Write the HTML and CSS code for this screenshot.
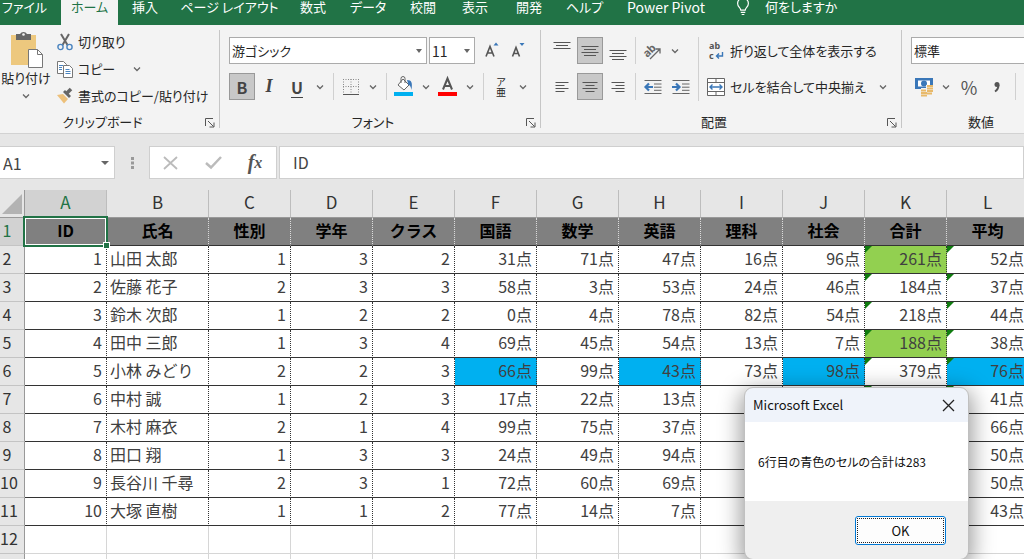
FILE: index.html
```html
<!DOCTYPE html>
<html lang="ja">
<head>
<meta charset="utf-8">
<meta name="viewport" content="width=device-width, initial-scale=1">
<title>Microsoft Excel</title>
<link rel="stylesheet" href="styles.css">
</head>
<body>
<svg class="defs" width="0" height="0" aria-hidden="true">
  <symbol id="chev" viewBox="0 0 8 8"><path d="M1 2.5 4 5.5 7 2.5" fill="none" stroke="#666" stroke-width="1.3"/></symbol>
  <symbol id="launch" viewBox="0 0 10 10"><path d="M.5 8V.5H8M3 3l5.5 5.5M9 4.5V9H4.5" fill="none" stroke="#555"/></symbol>
</svg>

<nav class="tabs">
  <button class="tab file">ファイル</button>
  <button class="tab active">ホーム</button>
  <button class="tab">挿入</button>
  <button class="tab">ページ レイアウト</button>
  <button class="tab">数式</button>
  <button class="tab">データ</button>
  <button class="tab">校閲</button>
  <button class="tab">表示</button>
  <button class="tab">開発</button>
  <button class="tab">ヘルプ</button>
  <button class="tab latin">Power Pivot</button>
  <button class="tab tell">
    <svg width="14" height="18" viewBox="0 0 14 20" fill="none" stroke="#fff" stroke-width="1.3"><path d="M4.5 13.500c0-3-3.500-3.500-3.500-7.500a6 6 0 0 1 12 0c0 4-3.500 4.500-3.500 7.500zM4.500 16h5M5.500 18.300h3"/></svg>
    <span>何をしますか</span>
  </button>
</nav>

<section class="ribbon">
  <div class="group">
    <div class="body clip">
      <button class="paste">
        <svg width="33" height="38" viewBox="0 0 33 38"><path d="M1 4h25v30H1z" fill="#edc87e"/><path d="M6 9V3h4a4 4 0 0 1 7 0h4v6z" fill="#666"/><circle cx="13.500" cy="3.500" r="1.300" fill="#f3f3f3"/><path d="M18.500 18.500h9l5 5v13h-14z" fill="#fff" stroke="#777"/><path d="M27.500 18.500v5h5" fill="none" stroke="#777"/></svg>
        <span>貼り付け</span>
        <svg width="8" height="8"><use href="#chev"/></svg>
      </button>
      <div class="cliplist">
        <button class="line">
          <svg width="16" height="18" viewBox="0 0 16 18" fill="none"><path d="m4 1 6.500 11M12 1 5.500 12" stroke="#666" stroke-width="2"/><circle cx="3.500" cy="14" r="2.600" stroke="#4a84bf" stroke-width="1.400"/><circle cx="12.500" cy="14" r="2.600" stroke="#4a84bf" stroke-width="1.400"/></svg>
          <span>切り取り</span>
        </button>
        <button class="line">
          <svg width="16" height="18" viewBox="0 0 16 18" fill="#fff" stroke="#777"><path d="M.5 1.500h6l3 3v9h-9z"/><path d="M6.500 5.500h6l3 3v9h-9z"/><path d="M2 5.500h4M2 7.500h3M2 9.500h3M8.500 9.500h4M8.500 11.500h5M8.500 13.500h5" stroke="#4a84bf"/></svg>
          <span class="copy">コピー</span><svg width="8" height="8"><use href="#chev"/></svg>
        </button>
        <button class="line">
          <svg width="16" height="16" viewBox="0 0 16 16"><path d="m0 7 6-1 5 5-4 4.500z" fill="#edc07a"/><path d="m6 4 2-2 6 6-2 2z" fill="#666"/><path d="m10 5 4-4" stroke="#666" stroke-width="3.500"/></svg>
          <span>書式のコピー/貼り付け</span>
        </button>
      </div>
    </div>
    <div class="caption"><span>クリップボード</span><button class="launcher" aria-label="クリップボードの詳細"><svg width="10" height="10"><use href="#launch"/></svg></button></div>
  </div>
  <i class="divider"></i>

  <div class="group">
    <div class="body fontbox">
      <div class="row">
        <label class="pick fname"><select aria-label="フォント名"><option>游ゴシック</option></select></label>
        <label class="pick fsize"><select aria-label="フォント サイズ"><option>11</option></select></label>
        <button class="tool" aria-label="拡大"><svg width="16" height="18" viewBox="0 0 16 18"><path d="m2 14.500 4-10 4 10M3.500 11h5" fill="none" stroke="#555" stroke-width="1.600"/><path d="m9.500 3.500 2.500-3 2.500 3z" fill="#3a77b8"/></svg></button>
        <button class="tool" aria-label="縮小"><svg width="16" height="18" viewBox="0 0 16 18"><path d="m2.500 14.500 3.500-9 3.500 9M4 11.500h4" fill="none" stroke="#555" stroke-width="1.600"/><path d="M9.500 1h5L12 4z" fill="#3a77b8"/></svg></button>
      </div>
      <div class="row">
        <button class="tool on"><b>B</b></button>
        <button class="tool wide italic">I</button>
        <button class="tool wide under">U</button>
        <button class="drop" aria-label="下線の種類"><svg width="8" height="8"><use href="#chev"/></svg></button>
        <i class="sep"></i>
        <button class="tool" aria-label="罫線"><svg width="18" height="18" viewBox="0 0 18 18" fill="none"><path d="M1.500 1v14M9 1v14M16.500 1v14M1 1.500h16M1 8.500h16" stroke="#888" stroke-dasharray="1 1.500"/><path d="M1 16.500h16" stroke="#555"/></svg></button>
        <button class="drop" aria-label="罫線の種類"><svg width="8" height="8"><use href="#chev"/></svg></button>
        <i class="sep"></i>
        <button class="tool" aria-label="塗りつぶしの色"><svg width="20" height="20" viewBox="0 0 20 20"><path d="m9 2 6 6-5 5-6-5z" fill="#fff" stroke="#666"/><path d="M7 6V1.500a2 2 0 0 1 4 0V6" fill="none" stroke="#666"/><path d="M13 3c5 0 5.500 3 4.500 10-.5-3-1.500-5-3-5z" fill="#3a77b8"/><path d="M0 15h19v4H0z" fill="#00b0f0"/></svg></button>
        <button class="drop" aria-label="色の選択"><svg width="8" height="8"><use href="#chev"/></svg></button>
        <button class="tool" aria-label="フォントの色"><svg width="20" height="20" viewBox="0 0 20 20"><path d="m5 12.500 4.500-11 4.500 11M6.500 9h6" fill="none" stroke="#555" stroke-width="2"/><path d="M0 15h19v4H0z" fill="#f00"/></svg></button>
        <button class="drop" aria-label="文字色の選択"><svg width="8" height="8"><use href="#chev"/></svg></button>
        <i class="sep"></i>
        <button class="tool ruby"><span>ア</span><span>亜</span></button>
        <button class="drop" aria-label="ふりがな"><svg width="8" height="8"><use href="#chev"/></svg></button>
      </div>
    </div>
    <div class="caption"><span>フォント</span><button class="launcher" aria-label="フォントの詳細"><svg width="10" height="10"><use href="#launch"/></svg></button></div>
  </div>
  <i class="divider"></i>

  <div class="group">
    <div class="body align">
      <div class="stack">
        <div class="row spaced">
          <button class="tool" aria-label="上揃え"><svg width="18" height="18" viewBox="0 0 18 18" stroke="#555"><path d="M.5 .5h17M3 3.500h12M.5 6.500h17"/></svg></button>
          <button class="tool on" aria-label="上下中央揃え"><svg width="18" height="18" viewBox="0 0 18 18" stroke="#555"><path d="M.5 4.500h17M3 7.500h12M.5 10.500h17M3 13.500h12"/></svg></button>
          <button class="tool" aria-label="下揃え"><svg width="18" height="18" viewBox="0 0 18 18" stroke="#555"><path d="M.5 8.500h17M3 11.500h12M.5 14.500h17M3 17.500h12"/></svg></button>
          <i class="sep"></i>
          <span class="pair"><button class="tool" aria-label="方向"><svg width="20" height="18" viewBox="0 0 20 18"><text class="abtext" x="0" y="12" transform="rotate(-45 7 9)">ab</text><path d="m7 17 10-10M12.500 7H17v4.500" fill="none" stroke="#666" stroke-width="1.300"/></svg></button><button class="drop" aria-label="方向の選択"><svg width="8" height="8"><use href="#chev"/></svg></button></span>
        </div>
        <div class="row spaced">
          <button class="tool" aria-label="左揃え"><svg width="14" height="14" viewBox="0 0 14 14" stroke="#555"><path d="M.5 2.500h13M.5 5.500h9M.5 8.500h13M.5 11.500h9"/></svg></button>
          <button class="tool on" aria-label="中央揃え"><svg width="16" height="14" viewBox="0 0 16 14" stroke="#555"><path d="M.5 2.500h15M3.500 5.500h9M.5 8.500h15M3.500 11.500h9"/></svg></button>
          <button class="tool" aria-label="右揃え"><svg width="14" height="14" viewBox="0 0 14 14" stroke="#555"><path d="M.5 2.500h13M4.500 5.500h9M.5 8.500h13M4.500 11.500h9"/></svg></button>
          <i class="sep"></i>
          <button class="tool" aria-label="インデントを減らす"><svg width="18" height="16" viewBox="0 0 18 16"><path d="M.5 1.500h17M.5 14.500h17M10 5h7.500M10 8.200h7.500M10 11.300h7.500" stroke="#666"/><path d="M9 8H2M5 4.500 1.500 8 5 11.500" fill="none" stroke="#3a77b8" stroke-width="2.200"/></svg></button>
          <button class="tool" aria-label="インデントを増やす"><svg width="18" height="16" viewBox="0 0 18 16"><path d="M.5 1.500h17M.5 14.500h17M10 5h7.500M10 8.200h7.500M10 11.300h7.500" stroke="#666"/><path d="M0 8h7M4 4.500 7.500 8 4 11.500" fill="none" stroke="#3a77b8" stroke-width="2.200"/></svg></button>
        </div>
      </div>
      <i class="sep tall"></i>
      <div class="stack">
        <button class="row line">
          <svg width="18" height="20" viewBox="0 0 18 20"><text class="wraptext" x="2" y="8">ab</text><text class="wraptext" x="2" y="18">c</text><path d="M15.500 11v4H9.500M12 12.500 9.500 15l2.500 2.500" fill="none" stroke="#3a77b8" stroke-width="1.400"/></svg>
          <span>折り返して全体を表示する</span>
        </button>
        <button class="row line">
          <svg width="18" height="18" viewBox="0 0 18 18"><path d="M.5.5h17v17H.5z" fill="#fff" stroke="#666"/><path d="M.5 4.500h17M.5 13.500h17M9 .5v4M9 13.500v4" stroke="#666"/><path d="M3 9h12M5.500 6.500 3 9l2.500 2.500M12.500 6.500 15 9l-2.500 2.500" fill="none" stroke="#3a77b8" stroke-width="1.400"/></svg>
          <span class="merge">セルを結合して中央揃え</span><svg width="8" height="8"><use href="#chev"/></svg>
        </button>
      </div>
    </div>
    <div class="caption"><span>配置</span><button class="launcher" aria-label="配置の詳細"><svg width="10" height="10"><use href="#launch"/></svg></button></div>
  </div>
  <i class="divider"></i>

  <div class="group last">
    <div class="body number">
      <div class="row"><label class="pick fmt"><select aria-label="表示形式"><option>標準</option></select></label></div>
      <div class="row">
        <button class="tool" aria-label="通貨表示形式"><svg width="18" height="18" viewBox="0 0 18 18"><path d="M0 0h18v11H0z" fill="#3a77b8"/><path d="M3 2.500h12v6H3z" fill="#fff"/><circle cx="9" cy="5.500" r="3" fill="#3a77b8"/><path d="M6 10h12v8H6zM11 7h7v4h-7z" fill="#f3f3f3"/><path d="M12 8h6M12 10.500h6M12 13h6M6 12.500h5M6 15h6M6 17.500h6M12 15.500h5" stroke="#e8b96a" stroke-width="1.800"/></svg></button>
        <button class="drop" aria-label="通貨の選択"><svg width="8" height="8"><use href="#chev"/></svg></button>
        <button class="tool wide pct">%</button>
        <button class="tool wide" aria-label="桁区切り"><svg width="8" height="12" viewBox="0 0 8 12"><path d="M2 10.500C4.500 9 5.500 7.500 5.500 4" fill="none" stroke="#555" stroke-width="2"/><circle cx="4" cy="3.500" r="2.500" fill="#555"/></svg></button>
        <i class="sep"></i>
      </div>
    </div>
    <div class="caption"><span>数値</span></div>
  </div>
</section>

<section class="formula">
  <div class="namebox"><input aria-label="名前ボックス" value="A1"></div>
  <span class="grip"><svg width="3" height="12" fill="#999"><path d="M0 0h3v3H0zM0 4.500h3v3H0zM0 9h3v3H0z"/></svg></span>
  <div class="fxbox">
    <button aria-label="キャンセル"><svg width="16" height="14" viewBox="0 0 16 14"><path d="m1 1 13 12M14 1 1 13" stroke="#bbb" stroke-width="1.800"/></svg></button>
    <button aria-label="入力"><svg width="17" height="13" viewBox="0 0 17 13"><path d="m1 7 5 4.500L16 1" fill="none" stroke="#bbb" stroke-width="2.500"/></svg></button>
    <button class="fx">f<small>x</small></button>
  </div>
  <input class="content" aria-label="数式バー" value="ID">
</section>

<main class="sheet">
  <table>
    <colgroup><col class="c-head"><col><col class="c-name"><col><col><col><col><col><col><col><col><col><col></colgroup>
    <thead>
      <tr><th class="corner"><svg width="20" height="20"><path d="M20 0v20H0z" fill="#b3b3b3"/></svg></th><th class="sel">A</th><th>B</th><th>C</th><th>D</th><th>E</th><th>F</th><th>G</th><th>H</th><th>I</th><th>J</th><th>K</th><th>L</th></tr>
    </thead>
    <tbody>
      <tr class="titles"><th class="sel">1</th><td class="cursor">ID</td><td>氏名</td><td>性別</td><td>学年</td><td>クラス</td><td>国語</td><td>数学</td><td>英語</td><td>理科</td><td>社会</td><td>合計</td><td>平均</td></tr>
      <tr><th>2</th><td>1</td><td class="name">山田 太郎</td><td>1</td><td>3</td><td>2</td><td>31点</td><td>71点</td><td>47点</td><td>16点</td><td>96点</td><td class="flag green">261点</td><td class="flag">52点</td></tr>
      <tr><th>3</th><td>2</td><td class="name">佐藤 花子</td><td>2</td><td>3</td><td>3</td><td>58点</td><td>3点</td><td>53点</td><td>24点</td><td>46点</td><td class="flag">184点</td><td class="flag">37点</td></tr>
      <tr><th>4</th><td>3</td><td class="name">鈴木 次郎</td><td>1</td><td>2</td><td>2</td><td>0点</td><td>4点</td><td>78点</td><td>82点</td><td>54点</td><td class="flag">218点</td><td class="flag">44点</td></tr>
      <tr><th>5</th><td>4</td><td class="name">田中 三郎</td><td>1</td><td>3</td><td>4</td><td>69点</td><td>45点</td><td>54点</td><td>13点</td><td>7点</td><td class="flag green">188点</td><td class="flag">38点</td></tr>
      <tr><th>6</th><td>5</td><td class="name">小林 みどり</td><td>2</td><td>2</td><td>3</td><td class="blue">66点</td><td>99点</td><td class="blue">43点</td><td>73点</td><td class="blue">98点</td><td class="flag">379点</td><td class="flag blue">76点</td></tr>
      <tr><th>7</th><td>6</td><td class="name">中村 誠</td><td>1</td><td>2</td><td>3</td><td>17点</td><td>22点</td><td>13点</td><td></td><td></td><td class="flag"></td><td class="flag">41点</td></tr>
      <tr><th>8</th><td>7</td><td class="name">木村 麻衣</td><td>2</td><td>1</td><td>4</td><td>99点</td><td>75点</td><td>37点</td><td></td><td></td><td></td><td>66点</td></tr>
      <tr><th>9</th><td>8</td><td class="name">田口 翔</td><td>1</td><td>3</td><td>3</td><td>24点</td><td>49点</td><td>94点</td><td></td><td></td><td></td><td>50点</td></tr>
      <tr><th>10</th><td>9</td><td class="name">長谷川 千尋</td><td>2</td><td>3</td><td>1</td><td>72点</td><td>60点</td><td>69点</td><td></td><td></td><td></td><td>50点</td></tr>
      <tr><th>11</th><td>10</td><td class="name">大塚 直樹</td><td>1</td><td>1</td><td>2</td><td>77点</td><td>14点</td><td>7点</td><td></td><td></td><td></td><td>43点</td></tr>
      <tr class="blank"><th>12</th><td></td><td></td><td></td><td></td><td></td><td></td><td></td><td></td><td></td><td></td><td></td><td></td></tr>
      <tr class="blank"><th></th><td></td><td></td><td></td><td></td><td></td><td></td><td></td><td></td><td></td><td></td><td></td><td></td></tr>
    </tbody>
  </table>
</main>

<div class="dialog" role="dialog" aria-labelledby="dlg-title">
  <header><span id="dlg-title">Microsoft Excel</span><button aria-label="閉じる"><svg width="13" height="13"><path d="m1 1 11 11M12 1 1 12" stroke="#222" stroke-width="1.300"/></svg></button></header>
  <p>6行目の青色のセルの合計は283</p>
  <footer><button>OK</button></footer>
</div>
</body>
</html>
```

FILE: styles.css
```css
* { box-sizing: border-box; }

body {
  margin: 0;
  height: 100vh;
  overflow: hidden;
  display: flex;
  flex-direction: column;
  position: relative;
  background: #e6e6e6;
  color: #262626;
  font: 13px/18px "Noto Sans CJK JP", "Noto Sans", sans-serif;
  font-feature-settings: "palt";
}

.defs { position: absolute; }

button, input, select {
  font: inherit;
  font-feature-settings: inherit;
  color: inherit;
  background: none;
  border: 0;
  padding: 0;
  margin: 0;
  border-radius: 0;
}

button {
  display: flex;
  align-items: center;
  justify-content: center;
  white-space: nowrap;
}

svg { flex: none; overflow: visible; }

/* Tabs */
.tabs {
  flex: none;
  display: grid;
  grid-template-columns: 61px 57px 54px 115px 52px 58px 52px 52px 56px 55px 108px 1fr;
  height: 25px;
  background: #217346;
}
.tab { color: #fff; height: 25px; padding-bottom: 11px; line-height: 14px; }
.tab.file { padding-right: 12px; }
.tab.active { background: #f3f3f3; color: #217346; }
.tab.latin { font-size: 14px; }
.tab.tell { justify-content: flex-start; gap: 15px; padding-left: 16px; }

/* Ribbon */
.ribbon {
  flex: none;
  display: flex;
  background: #f3f3f3;
  border-bottom: 1px solid #d2d2d2;
}
.group { flex: none; display: flex; flex-direction: column; }
.group.last { flex: 1; }
.divider { width: 1px; margin: 5px 0; background: #c6c6c6; }
.body { height: 88px; display: flex; padding-top: 12px; }
.caption { height: 20px; display: flex; align-items: center; padding-right: 4px; }
.caption span { flex: 1; text-align: center; padding-bottom: 2px; }
.launcher { width: 10px; height: 10px; }
.group.last .caption span { flex: none; padding-left: 66px; }

.clip { width: 219px; padding-top: 3px; }
.paste { width: 52px; flex-direction: column; justify-content: flex-start; padding-top: 3px; }
.paste svg:last-child { margin-top: 5px; }
.cliplist { padding-left: 5px; }
.line { height: 27px; gap: 5px; justify-content: flex-start; }
.copy { padding-right: 13px; }

.row { height: 27px; display: flex; align-items: stretch; }
.row.line { align-items: center; }
.spaced { gap: 2px; }
.fontbox, .stack, .number { display: flex; flex-direction: column; gap: 9px; }
.fontbox { width: 320px; padding-left: 9px; }
.tool { width: 26px; }
.tool.wide { width: 28px; }
.tool.on { background: #c8c8c8; border: 1px solid #999; }
.drop { width: 18px; }
.tool b { font-size: 16px; color: #444; }
.tool.italic { font: italic bold 18px "Liberation Serif", serif; color: #444; }
.tool.under { font-size: 16px; font-weight: bold; color: #444; text-decoration: underline; text-underline-offset: 3px; }
.tool.ruby { flex-direction: column; font-size: 10px; line-height: 10px; }
.tool.pct { font-size: 18px; color: #555; }
.sep { width: 1px; margin: 0 4px; background: #d0d0d0; }
.spaced .sep { margin: 0 2px; }
.pair { display: flex; }

.pick { position: relative; display: block; margin-right: 2px; }
.pick select {
  appearance: none;
  width: 100%;
  height: 27px;
  padding-left: 2px;
  background: #fff;
  border: 1px solid #ababab;
}
.pick::after, .namebox::after {
  content: "";
  position: absolute;
  right: 5px;
  top: 12px;
  border: 3px solid transparent;
  border-top: 4px solid #666;
  border-bottom: 0;
}
.fname { width: 198px; }
.fsize { width: 46px; margin-right: 4px; }
.fsize select { font-size: 14px; }
.fmt { flex: 1; margin-right: -20px; }

.align { width: 360px; padding-left: 8px; }
.sep.tall { height: 64px; margin: 0 8px 0 4px; }
.merge { padding-right: 8px; }
.abtext { font: bold 11px "Noto Sans", sans-serif; fill: #666; }
.wraptext { font: bold 9px/9px "Noto Sans", sans-serif; fill: #555; }
.number { padding-left: 9px; overflow: hidden; }

/* Formula bar */
.formula {
  flex: none;
  height: 56px;
  padding: 12px 0 11px;
  display: flex;
  font-size: 16px;
  color: #444;
}
.namebox, .fxbox, .content { background: #fff; border: 1px solid #cfcfcf; height: 33px; }
.namebox { position: relative; width: 115px; border-left: 0; }
.namebox input { width: 90px; height: 31px; padding-left: 3px; }
.namebox::after { top: 14px; border-width: 4px 4px 0; }
.grip { width: 34px; display: flex; align-items: center; justify-content: center; }
.fxbox { width: 128px; display: flex; margin-right: 2px; }
.fxbox button { flex: 1; }
.fxbox .fx { font: italic bold 20px "Liberation Serif", serif; color: #555; }
.fx small { font-size: 16px; }
.content { flex: 1; min-width: 0; padding: 0 0 2px 13px; }

/* Worksheet */
.sheet { flex: 1; min-height: 0; overflow: hidden; background: #fff; }
table {
  table-layout: fixed;
  width: 1029px;
  border-collapse: separate;
  border-spacing: 0;
  font-size: 16px;
  line-height: 20px;
  font-feature-settings: normal;
}
col { width: 82px; }
.c-head { width: 25px; }
.c-name { width: 102px; }
th { font-weight: normal; background: #e6e6e6; padding: 0 0 3px; color: #333; }
thead th {
  height: 28px;
  font-size: 17px;
  border-right: 1px solid #bdbdbd;
  border-bottom: 1px solid #999;
}
thead .corner { vertical-align: bottom; border-right-color: #999; line-height: 0; padding: 0 2px 3px 2px; }
tbody th {
  border-right: 1px solid #999;
  border-bottom: 1px solid #c4c4c4;
  text-align: center;
  white-space: nowrap;
  padding-right: 10px;
}
tbody tr { height: 28px; }
th.sel { background: #d2d2d2; color: #217346; }
td {
  position: relative;
  height: 28px;
  padding: 0 4px 4px 0;
  text-align: right;
  white-space: nowrap;
  border-right: 1px dotted #333;
  border-bottom: 1px solid #333;
  color: #404040;
}
td.name { text-align: left; padding-left: 3px; }
.titles td { background: #808080; color: #000; font-weight: bold; text-align: center; padding: 0 0 4px; border-right-color: #ddd; }
.green { background: #92d050; }
.blue { background: #00b0f0; }
.flag::before {
  content: "";
  position: absolute;
  left: 0;
  top: 0;
  border-top: 7px solid #107c10;
  border-right: 7px solid transparent;
}
.cursor::before {
  content: "";
  position: absolute;
  inset: -2px -2px -2px -2px;
  border: 2px solid #217346;
  box-shadow: inset 0 0 0 1px #fff;
}
.cursor::after {
  content: "";
  position: absolute;
  right: -3px;
  bottom: -3px;
  width: 5px;
  height: 5px;
  background: #217346;
  outline: 1px solid #fff;
}
.cursor { z-index: 1; }
.blank td { border-right: 1px solid #d6d6d6; border-bottom: 1px solid #d6d6d6; }

/* Message box */
.dialog {
  position: absolute;
  right: 56px;
  top: 388px;
  width: 223px;
  border-radius: 8px;
  overflow: hidden;
  background: #fff;
  outline: 1px solid #c0c0c0;
  box-shadow: 0 6px 22px 4px rgba(0, 0, 0, 0.4);
  color: #111;
  z-index: 2;
}
.dialog header {
  height: 34px;
  padding: 0 13px 0 8px;
  display: flex;
  align-items: center;
  justify-content: space-between;
  background: #eff3fa;
}
.dialog p { margin: 0; padding: 31px 13px 30px; font-size: 12px; white-space: nowrap; }
.dialog footer { height: 58px; padding: 15px 22px 0; display: flex; justify-content: flex-end; background: #efefef; }
.dialog footer button {
  width: 91px;
  height: 29px;
  background: #fdfdfd;
  border: 1px solid #0078d4;
  border-radius: 3px;
  outline: 1px dotted #222;
  outline-offset: -3px;
}
```
